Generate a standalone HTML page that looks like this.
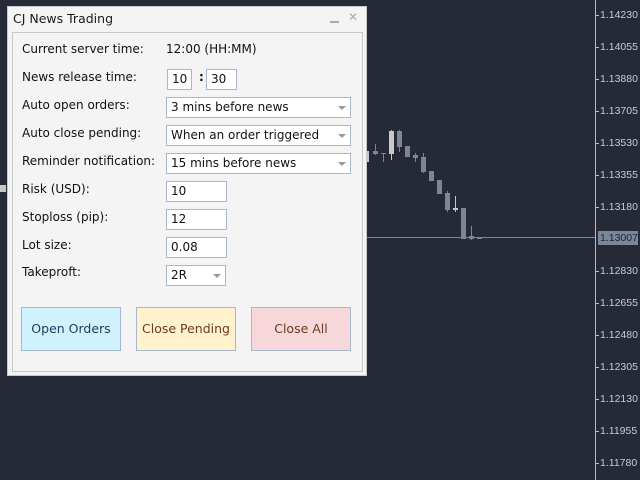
<!DOCTYPE html>
<html><head><meta charset="utf-8"><style>
*{margin:0;padding:0;box-sizing:border-box}
body{width:640px;height:480px;background:#262a36;position:relative;overflow:hidden;font-family:"DejaVu Sans","Liberation Sans",sans-serif;}
.ax{position:absolute;left:595px;top:0;width:1px;height:480px;background:#b8bcc4}
.lbl{position:absolute;left:600px;font-size:10.5px;color:#c8ccd4;line-height:12px;font-family:"Liberation Sans",sans-serif}
.tk{position:absolute;left:595px;width:4px;height:1px;background:#b8bcc4}
.pl{position:absolute;left:367px;top:237px;width:228px;height:1px;background:#7a8799}
.pbox{position:absolute;left:598px;top:231px;width:40px;height:14px;background:#7a8799;color:#1e2230;font-size:10.5px;line-height:14px;padding-left:2px;font-family:"Liberation Sans",sans-serif}
.c{position:absolute;background:#7a8799}
.w{background:#c8c8c8}
.panel{position:absolute;left:7px;top:6px;width:360px;height:370px;background:#f4f4f4;border:1px solid #c8c8c8}
.title{position:absolute;left:5px;top:4px;font-size:12.5px;color:#1a1a1a}
.inner{position:absolute;left:4px;top:25px;width:351px;height:340px;border:1px solid #c8c8c8}
.t{position:absolute;left:14px;font-size:12px;color:#111}
.box{position:absolute;background:#fff;border:1px solid #a8b8cc;font-size:12px;color:#111;padding-left:4px;line-height:19px}
.arr{position:absolute;right:4px;top:8px;width:0;height:0;border-left:4px solid transparent;border-right:4px solid transparent;border-top:4px solid #999}
.btn{position:absolute;top:300px;width:100px;height:44px;border:1px solid #a8b8cc;font-size:12.5px;text-align:center;line-height:42px}
</style></head><body>
<div class="ax"></div>
<div class="tk" style="top:15px"></div><div class="lbl" style="top:9px">1.14230</div>
<div class="tk" style="top:47px"></div><div class="lbl" style="top:41px">1.14055</div>
<div class="tk" style="top:79px"></div><div class="lbl" style="top:73px">1.13880</div>
<div class="tk" style="top:111px"></div><div class="lbl" style="top:105px">1.13705</div>
<div class="tk" style="top:143px"></div><div class="lbl" style="top:137px">1.13530</div>
<div class="tk" style="top:175px"></div><div class="lbl" style="top:169px">1.13355</div>
<div class="tk" style="top:207px"></div><div class="lbl" style="top:201px">1.13180</div>
<div class="tk" style="top:271px"></div><div class="lbl" style="top:265px">1.12830</div>
<div class="tk" style="top:303px"></div><div class="lbl" style="top:297px">1.12655</div>
<div class="tk" style="top:335px"></div><div class="lbl" style="top:329px">1.12480</div>
<div class="tk" style="top:367px"></div><div class="lbl" style="top:361px">1.12305</div>
<div class="tk" style="top:399px"></div><div class="lbl" style="top:393px">1.12130</div>
<div class="tk" style="top:431px"></div><div class="lbl" style="top:425px">1.11955</div>
<div class="tk" style="top:463px"></div><div class="lbl" style="top:457px">1.11780</div>
<div class="pl"></div><div class="pbox">1.13007</div>
<div class="c w" style="left:0;top:185px;width:6px;height:7px"></div>
<div class="c w" style="left:366px;top:151px;width:3px;height:11px"></div>
<div class="c" style="left:375px;top:144px;width:1px;height:11px"></div><div class="c" style="left:373px;top:151px;width:5px;height:3px"></div>
<div class="c" style="left:383px;top:153px;width:1px;height:9px"></div><div class="c" style="left:381px;top:153px;width:5px;height:1px"></div>
<div class="c w" style="left:391px;top:130px;width:1px;height:30px"></div><div class="c w" style="left:389px;top:131px;width:5px;height:23px"></div>
<div class="c" style="left:399px;top:130px;width:1px;height:22px"></div><div class="c" style="left:397px;top:131px;width:5px;height:16px"></div>
<div class="c" style="left:405px;top:146px;width:5px;height:11px"></div>
<div class="c" style="left:415px;top:153px;width:1px;height:9px"></div><div class="c" style="left:413px;top:155px;width:5px;height:3px"></div>
<div class="c" style="left:423px;top:153px;width:1px;height:20px"></div><div class="c" style="left:421px;top:157px;width:5px;height:15px"></div>
<div class="c" style="left:429px;top:171px;width:5px;height:10px"></div>
<div class="c" style="left:437px;top:180px;width:5px;height:14px"></div>
<div class="c" style="left:447px;top:191px;width:1px;height:21px"></div><div class="c" style="left:445px;top:193px;width:5px;height:17px"></div>
<div class="c w" style="left:455px;top:196px;width:1px;height:16px"></div><div class="c w" style="left:453px;top:208px;width:5px;height:2px"></div>
<div class="c" style="left:461px;top:208px;width:5px;height:31px"></div>
<div class="c" style="left:471px;top:226px;width:1px;height:14px"></div><div class="c" style="left:469px;top:236px;width:5px;height:3px"></div>
<div class="c" style="left:477px;top:237px;width:5px;height:2px"></div>
<div class="panel">
<div class="title">CJ News Trading</div>
<div style="position:absolute;left:322px;top:14px;width:9px;height:2px;background:#aaa"></div>
<div style="position:absolute;left:340px;top:3px;font-size:12px;color:#aaa;font-weight:bold">✕</div>
<div class="inner"></div>
<div class="t" style="top:35px">Current server time:</div>
<div class="t" style="left:158px;top:35px">12:00 (HH:MM)</div>
<div class="t" style="top:63px">News release time:</div>
<div class="box" style="left:159px;top:62px;width:25px;height:21px">10</div>
<div class="t" style="left:191px;top:63px;font-weight:bold">:</div>
<div class="box" style="left:198px;top:62px;width:31px;height:21px">30</div>
<div class="t" style="top:91px">Auto open orders:</div>
<div class="box" style="left:158px;top:90px;width:185px;height:21px">3 mins before news<div class="arr"></div></div>
<div class="t" style="top:119px">Auto close pending:</div>
<div class="box" style="left:158px;top:118px;width:185px;height:21px">When an order triggered<div class="arr"></div></div>
<div class="t" style="top:147px">Reminder notification:</div>
<div class="box" style="left:158px;top:146px;width:185px;height:21px">15 mins before news<div class="arr"></div></div>
<div class="t" style="top:175px">Risk (USD):</div>
<div class="box" style="left:158px;top:174px;width:61px;height:21px">10</div>
<div class="t" style="top:203px">Stoploss (pip):</div>
<div class="box" style="left:158px;top:202px;width:61px;height:21px">12</div>
<div class="t" style="top:231px">Lot size:</div>
<div class="box" style="left:158px;top:230px;width:61px;height:21px">0.08</div>
<div class="t" style="top:258px">Takeproft:</div>
<div class="box" style="left:158px;top:258px;width:60px;height:21px">2R<div class="arr"></div></div>
<div class="btn" style="left:13px;background:#d0f2fc;color:#1f3a5a">Open Orders</div>
<div class="btn" style="left:128px;background:#fff2cc;color:#6b3a1f">Close Pending</div>
<div class="btn" style="left:243px;background:#f8d7da;color:#6b3a1f">Close All</div>
</div>
</body></html>
